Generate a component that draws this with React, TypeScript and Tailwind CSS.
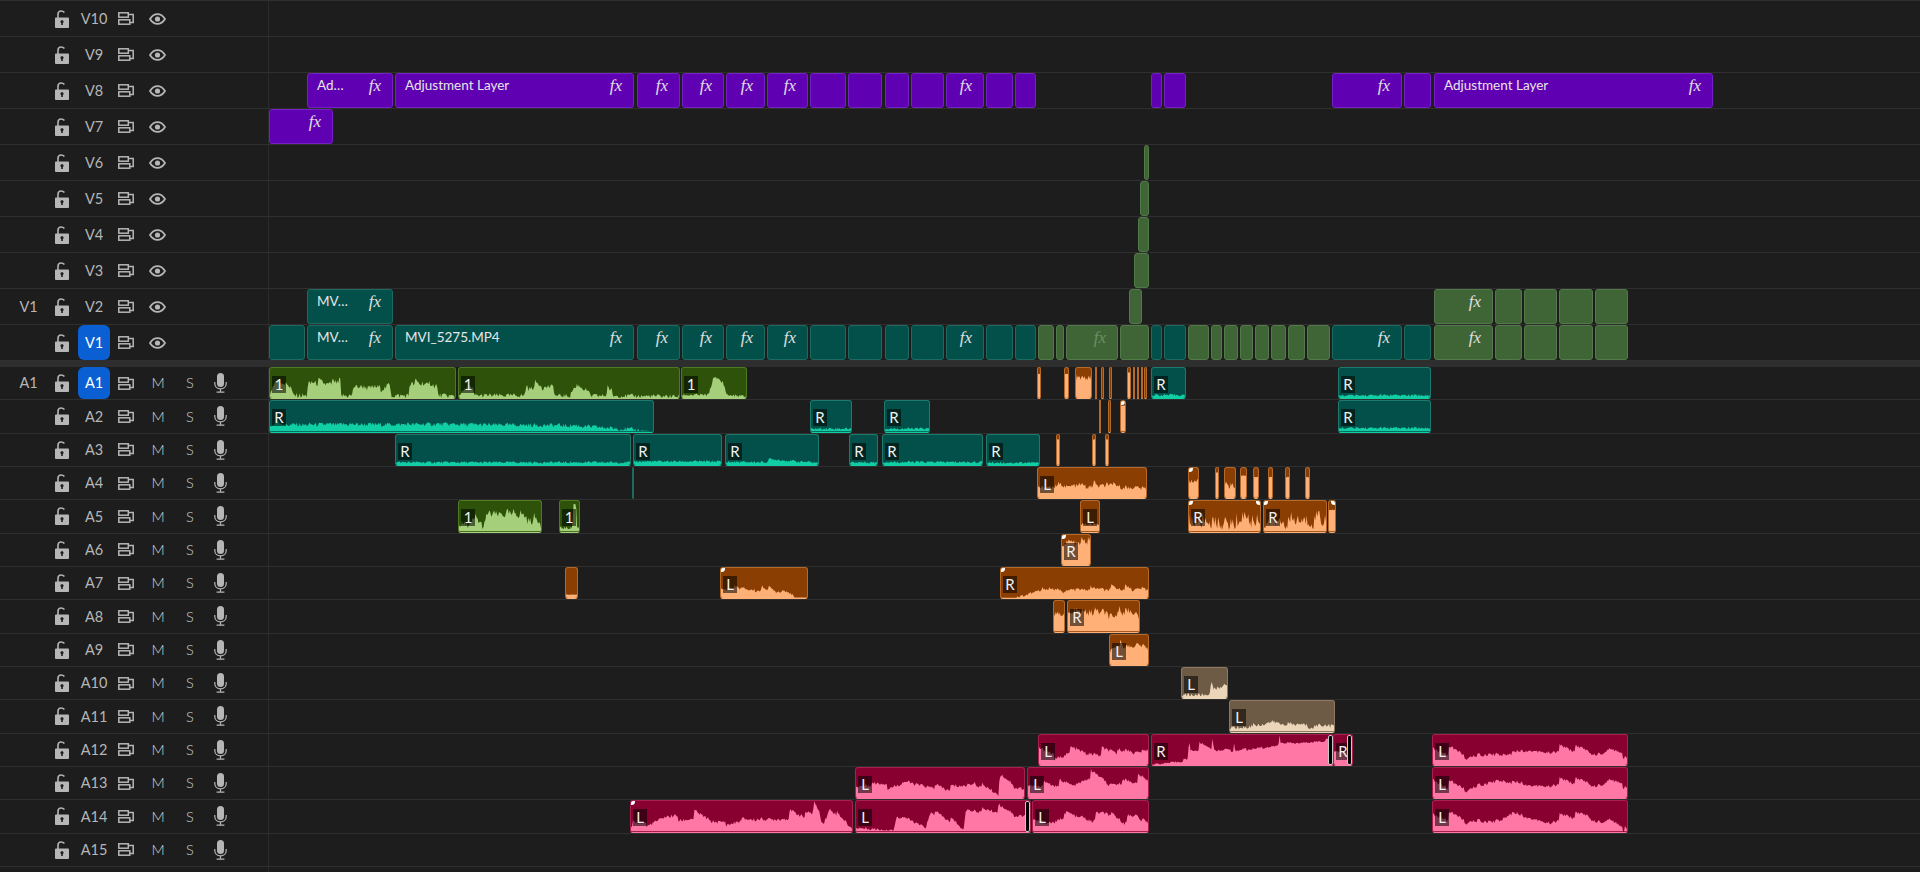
type Kind = "purple" | "teal" | "green" | "agreen" | "ateal" | "orange" | "beige" | "pink";
type Pt = [number, number];

type Clip = {
  x: number;
  r: number;
  kind: Kind;
  text?: string;
  fx?: boolean;
  dim?: boolean;
  tag?: string;
  wave?: Pt[];
  level?: number;
  noise?: number;
  tl?: boolean;
  tr?: boolean;
  brackets?: ("l" | "r")[];
};

type Track = {
  name: string;
  source?: string;
  active?: boolean;
  clips: Clip[];
};

const clipStyles: Record<Kind, string> = {
  purple: "bg-[#5f00b3] border-[#7420c4]",
  teal: "bg-[#03504a] border-[#1c6a61]",
  green: "bg-[#3f6436] border-[#527a48]",
  agreen: "bg-[#2e5209] border-[#4d7a22] border-b-[#a5cf7b]",
  ateal: "bg-[#03504a] border-[#1d7a6c] border-b-[#10cfa5]",
  orange: "bg-[#8a3e02] border-[#b56a2a] border-b-[#ffb076]",
  beige: "bg-[#6e5b45] border-[#8f7a60] border-b-[#ecd6b9]",
  pink: "bg-[#87002f] border-[#a81f50] border-b-[#ff78a5]",
};

const waveColors: Partial<Record<Kind, string>> = {
  agreen: "#a5cf7b",
  ateal: "#10cfa5",
  orange: "#ffb076",
  beige: "#ecd6b9",
  pink: "#ff78a5",
};

// size and spacing of the peaks drawn on top of a clip's rough level
const peaks: Partial<Record<Kind, { amount: number; every: number }>> = {
  agreen: { amount: 0.26, every: 7 },
  ateal: { amount: 0.03, every: 8 },
  orange: { amount: 0.2, every: 7 },
  beige: { amount: 0.2, every: 10 },
  pink: { amount: 0.5, every: 16 },
};

const rand = (n: number) => {
  const v = Math.sin(n * 12.9898) * 43758.5453;
  return v - Math.floor(v);
};

function levelAt(wave: Pt[], t: number) {
  for (let i = 1; i < wave.length; i++) {
    if (t <= wave[i][0]) {
      const [a, av] = wave[i - 1];
      const [b, bv] = wave[i];
      return av + ((bv - av) * (t - a)) / (b - a || 1);
    }
  }
  return wave[wave.length - 1][1];
}

function Waveform({ clip }: { clip: Clip }) {
  const w = clip.r - clip.x;
  const h = 32;
  const wave = clip.wave ?? [[0, clip.level ?? 0], [1, clip.level ?? 0]];
  const noise = clip.noise ?? 0.05;
  const peak = peaks[clip.kind] ?? { amount: 0, every: 8 };
  const amount = w > 20 ? peak.amount : 0;
  const pts = [`0,${h}`];
  for (let px = 0; px <= w; px += 1) {
    const base = levelAt(wave, px / w);
    const jitter = base > 0.03 ? (rand(clip.x + px) - 0.4) * noise : 0;
    // peaks rise fast and fall off slowly, as on a real audio clip
    const seg = Math.floor(px / peak.every);
    const fall = 1 - (px % peak.every) / peak.every;
    const bump = base > 0.12 ? fall * (rand(clip.x + seg * 7) - 0.35) * amount : 0;
    const top = h - Math.max(0, Math.min(1, base + jitter + bump)) * h;
    pts.push(`${px},${top.toFixed(1)}`);
  }
  pts.push(`${w},${h}`);
  return (
    <svg className="absolute inset-0 h-full w-full" viewBox={`0 0 ${w} ${h}`} preserveAspectRatio="none">
      <polygon points={pts.join(" ")} fill={waveColors[clip.kind]} />
    </svg>
  );
}

function TimelineClip({ clip }: { clip: Clip }) {
  const audio = clip.kind in waveColors;
  return (
    <div
      className={`absolute bottom-0 top-0 overflow-hidden rounded-[3px] border ${clipStyles[clip.kind]}`}
      style={{ left: clip.x - 269, width: clip.r - clip.x }}
    >
      {audio && <Waveform clip={clip} />}
      {clip.text && (
        <span className="absolute left-[9px] top-0 whitespace-nowrap text-[13.5px] leading-[22px] text-[#e6e6e6]">
          {clip.text}
        </span>
      )}
      {clip.fx && (
        <span
          className={`absolute right-[11px] top-0 font-['Liberation_Serif',serif] text-[17px] italic leading-[23px] ${
            clip.dim ? "text-[#6f8f66]" : "text-[#e0e0e0]"
          }`}
        >
          fx
        </span>
      )}
      {clip.tag && (
        <span className="absolute left-[2px] top-[8px] flex h-[17px] w-[14px] items-center justify-center bg-black/55 text-[15px] leading-none text-[#f0f0f0]">
          {clip.tag}
        </span>
      )}
      {clip.tl && <span className="absolute -left-[3px] -top-[3px] h-[7px] w-[7px] rounded-full bg-white" />}
      {clip.tr && <span className="absolute -right-[3px] -top-[3px] h-[7px] w-[7px] rounded-full bg-white" />}
      {clip.brackets?.includes("r") && (
        <span className="absolute bottom-0 right-0 top-0 w-[5px] rounded-[2px] border border-[#c8c8c8] bg-black" />
      )}
    </div>
  );
}

function LockIcon() {
  return (
    <svg width="14" height="18" viewBox="0 0 14 18" fill="none">
      <path d="M3 8V4.2C3 2.2 4.4 1 6 1C7.4 1 8.6 1.6 9.4 2.6" stroke="#b6b6b6" strokeWidth="1.6" />
      <path
        fillRule="evenodd"
        d="M1 7.5H13C13.5 7.5 14 8 14 8.5V17C14 17.5 13.5 18 13 18H1C.5 18 0 17.5 0 17V8.5C0 8 .5 7.5 1 7.5ZM7 10.2C6 10.2 5.4 10.9 5.4 11.7C5.4 12.3 5.7 12.8 6.2 13V15H7.8V13C8.3 12.8 8.6 12.3 8.6 11.7C8.6 10.9 8 10.2 7 10.2Z"
        fill="#b6b6b6"
      />
    </svg>
  );
}

function SyncIcon() {
  return (
    <svg width="16" height="13" viewBox="0 0 16 13" fill="none" stroke="#b6b6b6" strokeWidth="1.5">
      <rect x=".8" y=".8" width="9.5" height="4.4" />
      <rect x=".8" y="7.8" width="11" height="4.4" />
      <path d="M10.3 2.4H15.2V10.4H11.8" />
    </svg>
  );
}

function EyeIcon() {
  return (
    <svg width="17" height="12" viewBox="0 0 17 12" fill="none" className="-ml-[2px]">
      <path d="M1 6C3 2.8 5.6 1.1 8.5 1.1C11.4 1.1 14 2.8 16 6C14 9.2 11.4 10.9 8.5 10.9C5.6 10.9 3 9.2 1 6Z" stroke="#b6b6b6" strokeWidth="1.8" />
      <circle cx="8.5" cy="6" r="2.6" fill="#b6b6b6" />
    </svg>
  );
}

function MicIcon() {
  return (
    <svg width="13" height="20" viewBox="0 0 13 20" fill="none" className="-ml-[3px]">
      <rect x="3" y="0" width="7" height="14" rx="3.5" fill="#b6b6b6" />
      <path d="M.8 9V10.5C.8 13.6 3.2 15.8 6.5 15.8C9.8 15.8 12.2 13.6 12.2 10.5V9M6.5 15.8V19M2.6 19.2H10.4" stroke="#b6b6b6" strokeWidth="1.2" />
    </svg>
  );
}

function TrackRow({ track, audio }: { track: Track; audio: boolean }) {
  return (
    <div className={`flex border-b border-[#2f2f2f] ${audio ? "h-[33.33px]" : "h-[36px]"}`}>
      <div className="flex w-[269px] shrink-0 items-center border-r border-[#2b2b2b] text-[14.5px] text-[#b6b6b6]">
        <span className="w-[46px] pl-[11px] text-center">{track.source}</span>
        <span className="flex w-8 justify-center"><LockIcon /></span>
        <span
          className={`flex h-full w-8 items-center justify-center ${
            track.active ? "rounded-[6px] bg-[#0a5fd2] text-white" : ""
          }`}
        >
          {track.name}
        </span>
        <span className="flex w-8 justify-center"><SyncIcon /></span>
        {audio ? (
          <>
            <span className="flex w-8 justify-center font-light text-[#cfcfcf]">M</span>
            <span className="flex w-8 justify-center font-light text-[#cfcfcf]">S</span>
            <span className="flex w-8 justify-center"><MicIcon /></span>
          </>
        ) : (
          <span className="flex w-8 justify-center"><EyeIcon /></span>
        )}
      </div>
      <div className="relative flex-1">
        {track.clips.map((clip) => (
          <TimelineClip key={`${clip.kind}-${clip.x}`} clip={clip} />
        ))}
      </div>
    </div>
  );
}

const vid = (kind: Kind, x: number, r: number, extra: Partial<Clip> = {}): Clip => ({ kind, x, r, ...extra });
const or = (x: number, r: number, level: number, extra: Partial<Clip> = {}): Clip => ({ kind: "orange", x, r, level, noise: 0.02, ...extra });
const tealR = (x: number, r: number, level = 0.1): Clip => ({ kind: "ateal", x, r, level, tag: "R", noise: 0.08 });

const endGreen = [
  vid("green", 1434, 1493, { fx: true }),
  vid("green", 1495, 1522),
  vid("green", 1524, 1557),
  vid("green", 1559, 1593),
  vid("green", 1595, 1628),
];

const v8Middle = [
  vid("purple", 637, 680, { fx: true }),
  vid("purple", 682, 724, { fx: true }),
  vid("purple", 726, 765, { fx: true }),
  vid("purple", 767, 808, { fx: true }),
  vid("purple", 810, 846),
  vid("purple", 848, 882),
  vid("purple", 885, 909),
  vid("purple", 911, 944),
  vid("purple", 946, 984, { fx: true }),
  vid("purple", 986, 1013),
  vid("purple", 1015, 1036),
];

const pinkEnd = (wave: Pt[]): Clip => ({ kind: "pink", x: 1432, r: 1628, tag: "L", wave, noise: 0.1 });

const videoTracks: Track[] = [
  { name: "V10", clips: [] },
  { name: "V9", clips: [] },
  {
    name: "V8",
    clips: [
      vid("purple", 307, 393, { text: "Ad…", fx: true }),
      vid("purple", 395, 634, { text: "Adjustment Layer", fx: true }),
      ...v8Middle,
      vid("purple", 1151, 1162),
      vid("purple", 1164, 1186),
      vid("purple", 1332, 1402, { fx: true }),
      vid("purple", 1404, 1431),
      vid("purple", 1434, 1713, { text: "Adjustment Layer", fx: true }),
    ],
  },
  { name: "V7", clips: [vid("purple", 269, 333, { fx: true })] },
  { name: "V6", clips: [vid("green", 1144, 1149)] },
  { name: "V5", clips: [vid("green", 1140, 1149)] },
  { name: "V4", clips: [vid("green", 1138, 1149)] },
  { name: "V3", clips: [vid("green", 1134, 1149)] },
  {
    name: "V2",
    source: "V1",
    clips: [vid("teal", 307, 393, { text: "MV…", fx: true }), vid("green", 1129, 1142), ...endGreen],
  },
  {
    name: "V1",
    active: true,
    clips: [
      vid("teal", 269, 305),
      vid("teal", 307, 393, { text: "MV…", fx: true }),
      vid("teal", 395, 634, { text: "MVI_5275.MP4", fx: true }),
      ...v8Middle.map((c) => ({ ...c, kind: "teal" as Kind })),
      vid("green", 1038, 1054),
      vid("green", 1056, 1064),
      vid("green", 1066, 1118, { fx: true, dim: true }),
      vid("green", 1120, 1149),
      vid("teal", 1151, 1162),
      vid("teal", 1164, 1186),
      vid("green", 1188, 1209),
      vid("green", 1211, 1222),
      vid("green", 1224, 1238),
      vid("green", 1240, 1253),
      vid("green", 1255, 1269),
      vid("green", 1271, 1286),
      vid("green", 1288, 1305),
      vid("green", 1307, 1330),
      vid("teal", 1332, 1402, { fx: true }),
      vid("teal", 1404, 1431),
      ...endGreen,
    ],
  },
];

const audioTracks: Track[] = [
  {
    name: "A1",
    source: "A1",
    active: true,
    clips: [
      {
        kind: "agreen", x: 269, r: 456, tag: "1", noise: 0.18,
        wave: [[0, 0.08], [0.03, 0.55], [0.1, 0.45], [0.125, 0.08], [0.2, 0.06], [0.205, 0.45], [0.38, 0.45], [0.385, 0.07], [0.445, 0.07], [0.45, 0.36], [0.65, 0.36], [0.655, 0.07], [0.75, 0.07], [0.755, 0.45], [0.9, 0.35], [0.91, 0.08], [1, 0.05]],
      },
      {
        kind: "agreen", x: 458, r: 680, tag: "1", noise: 0.14,
        wave: [[0, 0.1], [0.05, 0.4], [0.07, 0.08], [0.3, 0.08], [0.305, 0.36], [0.43, 0.4], [0.435, 0.07], [0.5, 0.07], [0.52, 0.36], [0.58, 0.28], [0.6, 0.07], [0.67, 0.07], [0.675, 0.4], [0.7, 0.07], [1, 0.05]],
      },
      {
        kind: "agreen", x: 681, r: 747, tag: "1", noise: 0.1,
        wave: [[0, 0.1], [0.42, 0.1], [0.45, 0.35], [0.5, 0.7], [0.62, 0.5], [0.7, 0.1], [1, 0.05]],
      },
      or(1037, 1041, 0.8),
      or(1064, 1069, 0.8),
      or(1075, 1092, 0.65, { noise: 0.2 }),
      or(1095, 1097, 0),
      or(1101, 1104, 0),
      or(1109, 1112, 0),
      or(1127, 1131, 0.85),
      or(1133, 1135, 0),
      or(1137, 1139, 0),
      or(1141, 1143, 0),
      or(1144, 1147, 0),
      tealR(1151, 1186),
      tealR(1338, 1431, 0.09),
    ],
  },
  {
    name: "A2",
    clips: [
      {
        kind: "ateal", x: 269, r: 654, tag: "R", noise: 0.14,
        wave: [[0, 0.14], [0.02, 0.3], [0.04, 0.2], [0.4, 0.22], [0.8, 0.17], [0.88, 0.1], [0.98, 0.02], [1, 0]],
      },
      tealR(810, 852, 0.08),
      tealR(884, 930, 0.08),
      tealR(1338, 1431, 0.1),
      or(1099, 1101, 0),
      or(1108, 1111, 0),
      or(1120, 1126, 0.85, { tl: true }),
    ],
  },
  {
    name: "A3",
    clips: [
      tealR(395, 631, 0.09),
      tealR(633, 722, 0.12),
      { ...tealR(725, 819, 0.1), wave: [[0, 0.1], [0.45, 0.1], [0.47, 0.2], [0.75, 0.13], [1, 0.08]] },
      tealR(849, 878, 0.09),
      tealR(882, 983, 0.1),
      tealR(986, 1040, 0.08),
      or(1056, 1060, 0.85),
      or(1092, 1096, 0.85),
      or(1105, 1109, 0.85),
    ],
  },
  {
    name: "A4",
    clips: [
      vid("teal", 632, 633),
      {
        kind: "orange", x: 1037, r: 1147, tag: "L", noise: 0.14,
        wave: [[0, 0.3], [0.15, 0.38], [0.5, 0.38], [0.52, 0.58], [0.55, 0.38], [1, 0.34]],
      },
      or(1188, 1199, 0.55, { tl: true, noise: 0.15 }),
      or(1215, 1219, 0.85),
      or(1224, 1236, 0.4, { noise: 0.25 }),
      or(1240, 1247, 0.75),
      or(1253, 1259, 0.7),
      or(1268, 1273, 0.7),
      or(1285, 1290, 0.7),
      or(1305, 1310, 0.7),
    ],
  },
  {
    name: "A5",
    clips: [
      {
        kind: "agreen", x: 458, r: 542, tag: "1", noise: 0.24,
        wave: [[0, 0.2], [0.18, 0.2], [0.2, 0.4], [0.3, 0.1], [0.35, 0.5], [0.7, 0.48], [0.85, 0.4], [0.92, 0.3], [1, 0.25]],
      },
      {
        kind: "agreen", x: 559, r: 580, tag: "1", noise: 0.1,
        wave: [[0, 0.1], [0.65, 0.1], [0.7, 0.9], [0.85, 0.9], [0.88, 0.15], [1, 0.1]],
      },
      or(1080, 1100, 0.22, { tag: "L", noise: 0.1 }),
      { kind: "orange", x: 1188, r: 1261, tag: "R", noise: 0.45, tl: true, tr: true, wave: [[0, 0.25], [0.7, 0.2], [0.8, 0.6], [0.85, 0.25], [1, 0.3]] },
      { kind: "orange", x: 1263, r: 1327, tag: "R", noise: 0.45, tl: true, wave: [[0, 0.25], [0.8, 0.25], [0.87, 0.6], [0.92, 0.3], [1, 0.3]] },
      or(1328, 1336, 0.7, { tr: true }),
    ],
  },
  {
    name: "A6",
    clips: [{ kind: "orange", x: 1061, r: 1091, tag: "R", noise: 0.2, level: 0.72, tl: true }],
  },
  {
    name: "A7",
    clips: [
      or(565, 578, 0.12),
      { kind: "orange", x: 720, r: 808, tag: "L", noise: 0.08, tl: true, wave: [[0, 0.2], [0.1, 0.3], [0.5, 0.26], [0.8, 0.2], [0.85, 0.03], [1, 0.03]] },
      {
        kind: "orange", x: 1000, r: 1149, tag: "R", noise: 0.1, tl: true,
        wave: [[0, 0.02], [0.1, 0.02], [0.3, 0.25], [0.6, 0.26], [1, 0.32]],
      },
    ],
  },
  {
    name: "A8",
    clips: [
      or(1053, 1065, 0.55, { noise: 0.15 }),
      {
        kind: "orange", x: 1067, r: 1140, tag: "R", noise: 0.25,
        wave: [[0, 0.5], [0.3, 0.62], [0.6, 0.5], [0.65, 0.35], [0.72, 0.68], [0.9, 0.68], [1, 0.35]],
      },
    ],
  },
  {
    name: "A9",
    clips: [
      {
        kind: "orange", x: 1109, r: 1149, tag: "L", noise: 0.12,
        wave: [[0, 0.5], [0.25, 0.6], [0.28, 0.8], [0.35, 0.65], [0.8, 0.62], [1, 0.5]],
      },
    ],
  },
  {
    name: "A10",
    clips: [
      {
        kind: "beige", x: 1181, r: 1228, tag: "L", noise: 0.12,
        wave: [[0, 0.1], [0.6, 0.1], [0.65, 0.4], [0.7, 0.2], [0.85, 0.35], [1, 0.4]],
      },
    ],
  },
  {
    name: "A11",
    clips: [
      {
        kind: "beige", x: 1229, r: 1335, tag: "L", noise: 0.14,
        wave: [[0, 0.12], [0.2, 0.12], [0.4, 0.3], [0.7, 0.18], [1, 0.18]],
      },
    ],
  },
  {
    name: "A12",
    clips: [
      {
        kind: "pink", x: 1038, r: 1149, tag: "L", noise: 0.12,
        wave: [[0, 0.3], [0.3, 0.4], [0.5, 0.38], [0.58, 0.28], [0.8, 0.42], [1, 0.5]],
      },
      {
        kind: "pink", x: 1151, r: 1334, tag: "R", noise: 0.06, brackets: ["r"],
        wave: [[0, 0.02], [0.2, 0.14], [0.205, 1], [0.21, 0.45], [0.33, 0.48], [0.335, 0.95], [0.34, 0.5], [0.45, 0.55], [0.455, 0.95], [0.46, 0.55], [0.7, 0.65], [0.705, 0.95], [0.71, 0.7], [1, 0.8]],
      },
      { kind: "pink", x: 1333, r: 1353, tag: "R", noise: 0.05, level: 0.45, brackets: ["r"] },
      pinkEnd([[0, 0.3], [0.3, 0.38], [0.35, 0.28], [0.5, 0.48], [0.7, 0.42], [1, 0.4]]),
    ],
  },
  {
    name: "A13",
    clips: [
      {
        kind: "pink", x: 855, r: 1025, tag: "L", noise: 0.12,
        wave: [[0, 0.3], [0.1, 0.45], [0.3, 0.5], [0.55, 0.22], [0.7, 0.45], [0.85, 0.1], [0.86, 0.55], [1, 0.35]],
      },
      {
        kind: "pink", x: 1027, r: 1149, tag: "L", noise: 0.1,
        wave: [[0, 0.45], [0.2, 0.32], [0.4, 0.38], [0.5, 0.62], [0.7, 0.5], [1, 0.45]],
      },
      pinkEnd([[0, 0.35], [0.12, 0.28], [0.3, 0.55], [0.5, 0.42], [0.8, 0.45], [1, 0.5]]),
    ],
  },
  {
    name: "A14",
    clips: [
      {
        kind: "pink", x: 630, r: 853, tag: "L", noise: 0.12, tl: true,
        wave: [[0, 0.1], [0.1, 0.35], [0.2, 0.5], [0.4, 0.3], [0.65, 0.38], [0.82, 0.45], [0.83, 0.9], [0.87, 0.3], [0.9, 0.75], [1, 0.05]],
      },
      {
        kind: "pink", x: 855, r: 1031, tag: "L", noise: 0.1, brackets: ["r"],
        wave: [[0, 0.1], [0.22, 0.03], [0.23, 0.55], [0.4, 0.1], [0.43, 0.6], [0.62, 0.05], [0.63, 0.65], [1, 0.55]],
      },
      {
        kind: "pink", x: 1032, r: 1149, tag: "L", noise: 0.12,
        wave: [[0, 0.2], [0.2, 0.28], [0.3, 0.55], [0.5, 0.28], [0.65, 0.5], [0.8, 0.22], [0.9, 0.4], [1, 0.2]],
      },
      pinkEnd([[0, 0.3], [0.2, 0.4], [0.35, 0.3], [0.4, 0.55], [0.6, 0.3], [0.8, 0.45], [1, 0.1]]),
    ],
  },
  { name: "A15", clips: [] },
];

export default function App() {
  return (
    <div className="h-[872px] w-[1920px] overflow-hidden border-t border-[#2f2f2f] bg-[#1d1d1d] font-['Lato',sans-serif]">
      {videoTracks.map((track) => (
        <TrackRow key={track.name} track={track} audio={false} />
      ))}
      <div className="h-[6px] bg-[#2e2e2e]" />
      {audioTracks.map((track) => (
        <TrackRow key={track.name} track={track} audio />
      ))}
      <div className="flex h-[6px]">
        <div className="w-[269px] border-r border-[#2b2b2b]" />
      </div>
    </div>
  );
}
